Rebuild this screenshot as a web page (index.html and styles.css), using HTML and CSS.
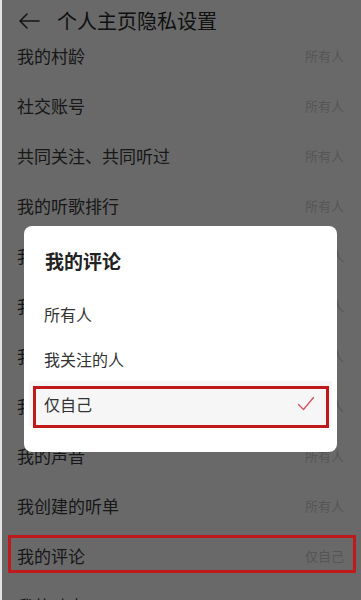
FILE: index.html
```html
<!DOCTYPE html>
<html>
<head>
<meta charset="utf-8" />
<title>个人主页隐私设置</title>
<link rel="stylesheet" href="styles.css">
</head>
<body>
<div class="screen">
    <div class="topbar">
        <svg class="back" width="22" height="18" viewBox="0 0 22 18"><path d="M21 9H2M9 2L2 9l7 7" fill="none" stroke="#333" stroke-width="1.6" stroke-linecap="round" stroke-linejoin="round"/></svg>
        <span class="title">个人主页隐私设置</span>
    </div>
    <div class="list">
        <ul class="rows">
            <li><span class="name">我的村龄</span><span class="val">所有人</span></li>
            <li><span class="name">社交账号</span><span class="val">所有人</span></li>
            <li><span class="name">共同关注、共同听过</span><span class="val">所有人</span></li>
            <li><span class="name">我的听歌排行</span><span class="val">所有人</span></li>
            <li><span class="name">我的主播</span><span class="val">所有人</span></li>
            <li><span class="name">我的订阅</span><span class="val">所有人</span></li>
            <li><span class="name">我的喜欢</span><span class="val">所有人</span></li>
            <li><span class="name">我的收藏</span><span class="val">所有人</span></li>
            <li><span class="name">我的声音</span><span class="val">所有人</span></li>
            <li><span class="name">我创建的听单</span><span class="val">所有人</span></li>
            <li class="marked"><span class="name">我的评论</span><span class="val">仅自己</span><div class="mark mark_row"></div></li>
            <li><span class="name">我的动态</span><span class="val">所有人</span></li>
        </ul>
    </div>
    <div class="mask"></div>
    <div class="dialog">
        <div class="dlg_title">我的评论</div>
        <ul class="options">
            <li>所有人</li>
            <li>我关注的人</li>
            <li class="on">仅自己
                <svg class="check" width="18" height="16" viewBox="0 0 18 16"><path d="M1.5 8.5L6.5 13.5L16.5 1.5" fill="none" stroke="#d9515b" stroke-width="1.3" stroke-linecap="round" stroke-linejoin="round"/></svg>
            </li>
        </ul>
        <div class="mark mark_opt"></div>
    </div>
</div>
</body>
</html>
```

FILE: styles.css
```css
body { margin: 0; background: #fff; font-family: "Noto Sans CJK SC", "Noto Sans", sans-serif; }
ul { padding: 0; margin: 0; }
li { list-style: none; }

.screen { width: 361px; height: 600px; position: relative; overflow: hidden; background: #fff; display: flex; flex-direction: column; border-left: 2px solid #e4e4e4; box-sizing: border-box; }

.topbar { height: 42px; flex-shrink: 0; display: flex; align-items: center; padding-left: 16px; background: #fff; position: relative; }
.back { margin-right: 17px; }
.title { font-size: 20px; color: #2a2a2a; line-height: 24px; }

.list { flex: 1; overflow: hidden; }
.rows { margin-top: -12px; }
.rows li { height: 50px; display: flex; align-items: center; justify-content: space-between; padding: 0 17px 0 15px; position: relative; }
.rows .name { font-size: 17px; color: #3a3a3a; }
.rows .val { font-size: 13px; color: #cfcfcf; }

.mask { position: absolute; top: 0; left: 0; right: 0; bottom: 0; background: rgba(0,0,0,0.59); z-index: 1; }

.mark { position: absolute; border: 3px solid #c0191b; box-sizing: border-box; z-index: 3; }
.mark_row { left: 6px; top: 5px; width: 348px; height: 38px; }

.dialog { position: absolute; left: 22px; top: 226px; width: 313px; height: 226px; background: #fff; border-radius: 8px; z-index: 2; }
.dlg_title { padding: 23px 20px 0 21px; font-size: 19px; line-height: 24px; font-weight: bold; color: #222; }
.options { margin-top: 18px; }
.options li { height: 45px; display: flex; align-items: center; justify-content: space-between; padding: 0 22px 0 20px; font-size: 16px; color: #333; }
.options li.on { background: #f6f6f6; margin: 0 5px; padding: 0 17px 0 15px; }
.mark_opt { left: 9px; top: 160px; width: 296px; height: 42px; }
```
